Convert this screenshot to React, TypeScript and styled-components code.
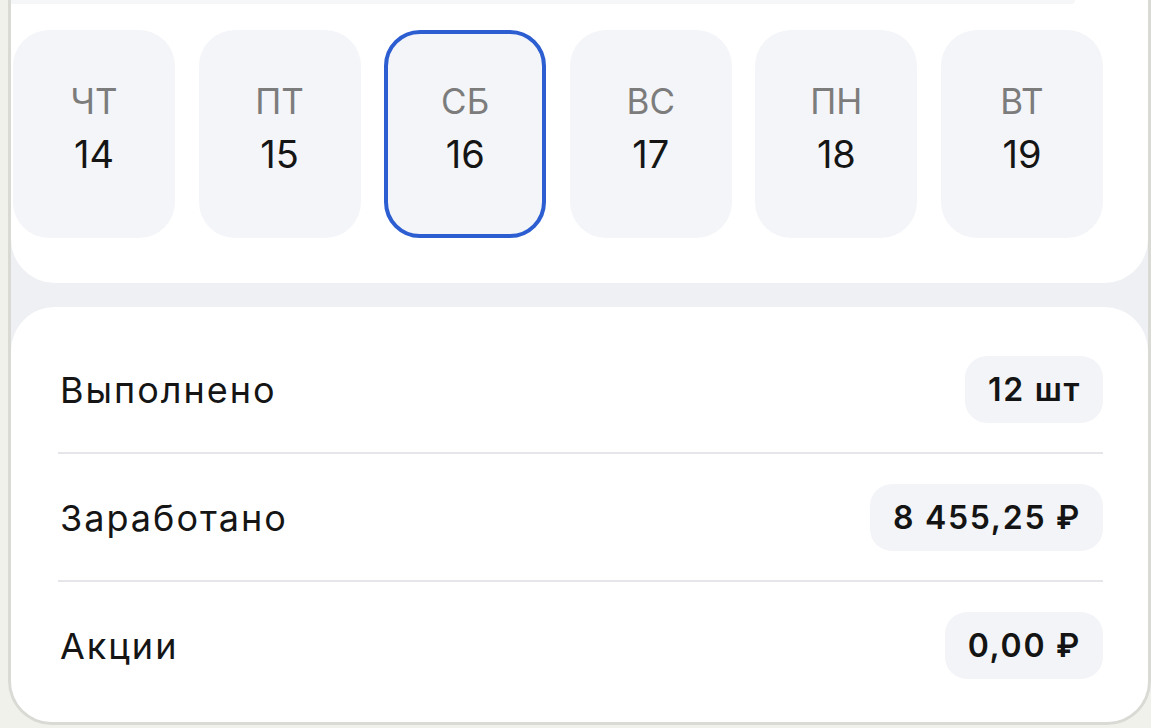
import React from "react";
import styled, { createGlobalStyle } from "styled-components";

const GlobalStyle = createGlobalStyle`
  html, body {
    margin: 0;
    padding: 0;
    background: #f1f1ec;
    font-family: Inter, "Noto Sans", sans-serif;
    overflow: hidden;
  }
  * { box-sizing: border-box; }
`;

const Page = styled.div`
  width: 1151px;
  height: 728px;
  padding-left: 8px;
`;

const Screen = styled.div`
  width: 1143px;
  height: 725px;
  border: 3px solid #dadad5;
  border-top: none;
  border-radius: 0 0 44px 44px;
  background: #eef0f4;
  overflow: hidden;
  display: flex;
  flex-direction: column;
`;

const TopCard = styled.section`
  background: #ffffff;
  height: 283px;
  border-radius: 0 0 44px 44px;
  display: flex;
  flex-direction: column;
`;

const TopEdge = styled.div`
  height: 4px;
  width: 1064px;
  background: #f5f6f8;
  border-radius: 0 0 24px 0;
`;

const DayStrip = styled.div`
  display: flex;
  gap: 23.6px;
  padding: 26px 0 0 2px;
`;

const DayTile = styled.div<{ $active?: boolean }>`
  flex: 0 0 162px;
  height: 208px;
  border-radius: 36px;
  background: #f4f5f8;
  border: ${(p) => (p.$active ? "4px solid #2c5ed2" : "4px solid transparent")};
  display: flex;
  flex-direction: column;
  align-items: center;
  justify-content: center;
  gap: 12px;
  padding-bottom: 12px;
`;

const DayName = styled.span`
  font-size: 35px;
  line-height: 40px;
  color: #7c7c7c;
  font-weight: 400;
`;

const DayNumber = styled.span`
  font-size: 38px;
  line-height: 42px;
  color: #151515;
  font-weight: 400;
`;

const StatsCard = styled.section`
  margin-top: 24px;
  flex: 1;
  background: #ffffff;
  border-radius: 44px 44px 0 0;
  padding: 49px 45px 0 47px;
  display: flex;
  flex-direction: column;
`;

const StatRow = styled.div`
  height: 67px;
  display: flex;
  align-items: center;
  justify-content: space-between;
`;

const StatLabel = styled.span`
  font-size: 36px;
  color: #151515;
  font-weight: 400;
  padding-left: 2px;
  letter-spacing: 2px;
`;

const StatValue = styled.span`
  height: 67px;
  border-radius: 22px;
  background: #f3f4f7;
  padding: 0 22px 0 23px;
  display: flex;
  align-items: center;
  font-size: 32px;
  font-weight: 600;
  letter-spacing: 1.7px;
  color: #141414;
`;

const Divider = styled.div`
  height: 2px;
  background: #e5e6e9;
  margin: 29px 0 30px;
`;

const days = [
  { name: "ЧТ", num: 14 },
  { name: "ПТ", num: 15 },
  { name: "СБ", num: 16, active: true },
  { name: "ВС", num: 17 },
  { name: "ПН", num: 18 },
  { name: "ВТ", num: 19 },
];

const stats = [
  { label: "Выполнено", value: "12 шт" },
  { label: "Заработано", value: "8 455,25 ₽" },
  { label: "Акции", value: "0,00 ₽" },
];

export default function App() {
  return (
    <Page>
      <GlobalStyle />
      <Screen>
        <TopCard>
          <TopEdge />
          <DayStrip>
            {days.map((d) => (
              <DayTile key={d.num} $active={d.active}>
                <DayName>{d.name}</DayName>
                <DayNumber>{d.num}</DayNumber>
              </DayTile>
            ))}
          </DayStrip>
        </TopCard>
        <StatsCard>
          {stats.map((s, i) => (
            <React.Fragment key={s.label}>
              {i > 0 && <Divider />}
              <StatRow>
                <StatLabel>{s.label}</StatLabel>
                <StatValue>{s.value}</StatValue>
              </StatRow>
            </React.Fragment>
          ))}
        </StatsCard>
      </Screen>
    </Page>
  );
}
